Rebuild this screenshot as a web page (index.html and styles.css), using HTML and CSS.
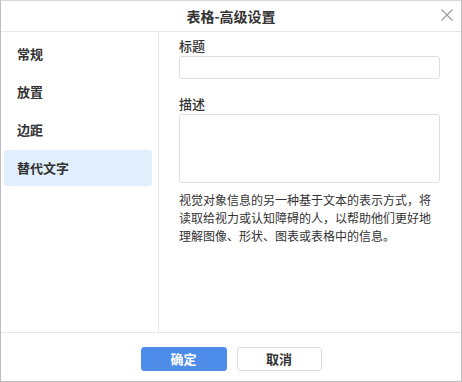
FILE: index.html
```html
<!DOCTYPE html>
<html lang="zh-CN">
<head>
<meta charset="utf-8">
<link rel="stylesheet" href="styles.css">
</head>
<body>
<div class="dialog">
  <div class="header">
    <div class="title">表格-高级设置</div>
    <button class="close" aria-label="关闭">
      <svg width="12" height="12" viewBox="0 0 12 12"><path d="M0.5 0.5 L11.5 11.5 M11.5 0.5 L0.5 11.5" stroke="#9a9a9a" stroke-width="1.1" fill="none"/></svg>
    </button>
  </div>
  <div class="main">
    <div class="sidebar">
      <div class="nav-item">常规</div>
      <div class="nav-item">放置</div>
      <div class="nav-item">边距</div>
      <div class="nav-item active">替代文字</div>
    </div>
    <div class="content">
      <div class="label">标题</div>
      <div class="input"></div>
      <div class="label label-gap">描述</div>
      <div class="textarea"></div>
      <p class="desc">视觉对象信息的另一种基于文本的表示方式，将读取给视力或认知障碍的人，以帮助他们更好地理解图像、形状、图表或表格中的信息。</p>
    </div>
  </div>
  <div class="footer">
    <button class="btn primary">确定</button>
    <button class="btn">取消</button>
  </div>
</div>
</body>
</html>
```
FILE: styles.css
```css
* { box-sizing: border-box; }
html, body { margin: 0; padding: 0; background: #fff; }
body {
  font-family: "Noto Sans CJK SC", "Noto Sans", sans-serif;
  color: #333;
}
.dialog {
  width: 462px;
  height: 382px;
  border: 1px solid #bdbdbd;
  border-top-color: #d8d8d8;
  display: flex;
  flex-direction: column;
  background: #fff;
}
.header {
  height: 31px;
  flex: none;
  border-bottom: 1px solid #e6e6e6;
  display: flex;
  align-items: center;
  justify-content: center;
  position: relative;
}
.title {
  font-size: 14px;
  font-weight: 600;
  color: #333;
  line-height: 20px;
  margin-top: -1px;
}
.close {
  position: absolute;
  right: 8px;
  top: 8px;
  width: 12px;
  height: 12px;
  padding: 0;
  border: none;
  background: none;
  display: flex;
}
.main {
  flex: 1;
  display: flex;
  min-height: 0;
}
.sidebar {
  width: 158px;
  flex: none;
  border-right: 1px solid #e6e6e6;
  padding: 4px 6px 0 3px;
  display: flex;
  flex-direction: column;
  gap: 2px;
}
.nav-item {
  height: 36px;
  line-height: 36px;
  padding-left: 13px;
  font-size: 13px;
  font-weight: 600;
  color: #333;
  border-radius: 3px;
}
.nav-item.active { background: #e1eefb; }
.content {
  flex: 1;
  padding: 5px 21px 0 20px;
  display: flex;
  flex-direction: column;
}
.label {
  font-size: 13px;
  font-weight: 500;
  line-height: 18px;
  height: 19px;
  color: #333;
}
.label-gap { margin-top: 16px; }
.input {
  height: 23px;
  border: 1px solid #dedede;
  border-radius: 3px;
}
.textarea {
  height: 69px;
  border: 1px solid #dedede;
  border-radius: 3px;
}
.desc {
  margin: 8px 0 0 0;
  font-size: 12px;
  line-height: 18px;
  color: #333;
}
.footer {
  height: 49px;
  flex: none;
  border-top: 1px solid #e6e6e6;
  display: flex;
  justify-content: center;
  align-items: flex-start;
  padding-top: 14px;
  gap: 10px;
}
.btn {
  width: 85px;
  height: 24px;
  border: 1px solid #dcdcdc;
  border-radius: 3px;
  background: #fff;
  font-family: inherit;
  font-size: 13px;
  font-weight: 600;
  color: #333;
  padding: 0;
  line-height: 22px;
}
.btn.primary {
  width: 86px;
  background: #4d8ce9;
  border-color: #4d8ce9;
  color: #fff;
}
```
